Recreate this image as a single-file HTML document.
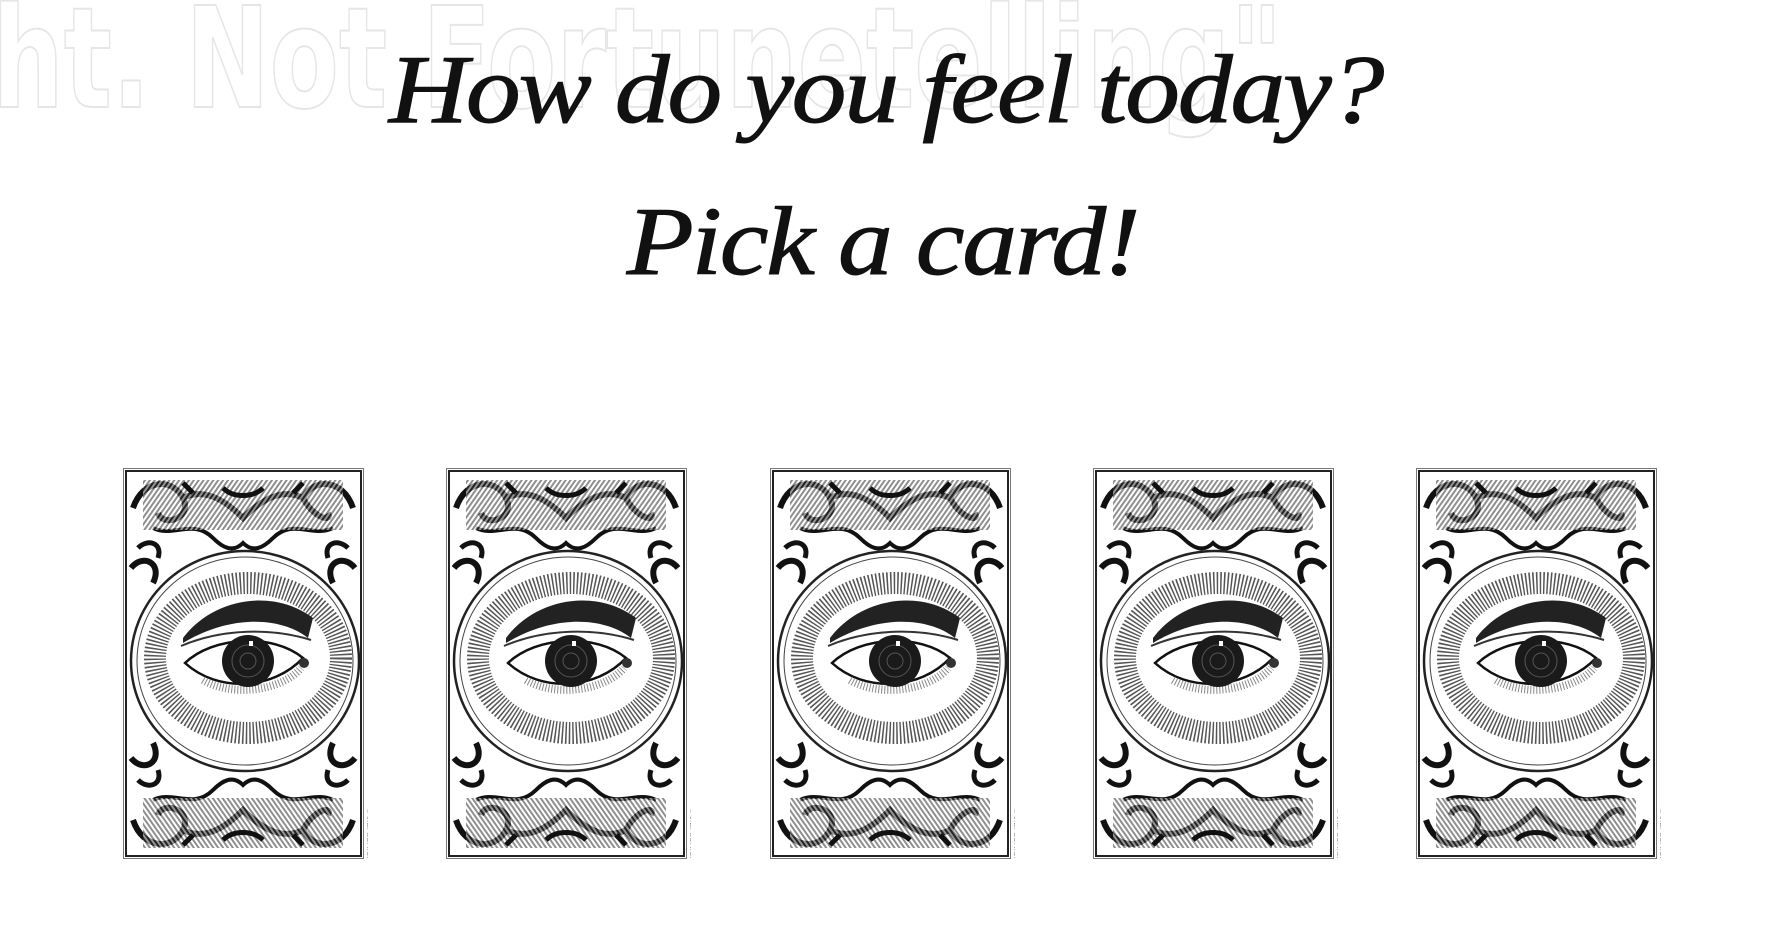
<!DOCTYPE html>
<html><head><meta charset="utf-8">
<style>
html,body{margin:0;padding:0;background:#fff;width:1781px;height:933px;overflow:hidden;position:relative}
.bg{position:absolute;left:-8px;top:-22px;font:bold 140px "DejaVu Sans","Liberation Sans",sans-serif;color:#fff;-webkit-text-stroke:2px #e6e6e6;white-space:nowrap;transform:scaleX(0.72);transform-origin:0 0}
.t{position:absolute;left:0;width:1781px;text-align:center;font:italic 98px "Liberation Serif","DejaVu Serif",serif;color:#111;-webkit-text-stroke:1px #111;letter-spacing:-2px;transform:scaleX(1.12)}
.card{position:absolute;top:468px;width:245px;height:392px}
</style></head><body>
<div class="bg">ht. Not Fortunetelling"</div>
<div class="t" style="top:34px;left:-5px">How do you feel today?</div>
<div class="t" style="top:186px;left:-8px">Pick a card!</div>
<svg width="0" height="0" style="position:absolute">
<defs>
<pattern id="hat" width="4" height="4" patternUnits="userSpaceOnUse" patternTransform="rotate(35)"><rect width="4" height="4" fill="#fff"/><rect width="2" height="4" fill="#333"/></pattern>
<g id="orn">
<path d="M10 40 C20 10 50 10 60 30 C70 50 40 60 35 45 M60 30 C80 20 100 30 120 50 C140 30 160 20 180 30 M180 30 C190 10 220 10 230 40 M180 30 C190 50 210 55 205 45" fill="none" stroke="#111" stroke-width="6"/>
<path d="M30 60 C50 70 70 50 90 70 C100 80 110 85 120 75 C130 85 140 80 150 70 C170 50 190 70 210 60" fill="none" stroke="#111" stroke-width="4"/>
<rect x="20" y="12" width="200" height="50" fill="url(#hat)" opacity=".55"/>
<path d="M15 80 C25 70 40 75 35 90 M225 80 C215 70 200 75 205 90 M60 15 l10 10 M180 15 l-10 10 M100 20 c10 10 30 10 40 0" fill="none" stroke="#111" stroke-width="5"/>
</g>
<symbol id="card" viewBox="0 0 245 392">
<rect x="0.5" y="0.5" width="240" height="390" fill="#fff" stroke="#777" stroke-width="1"/>
<rect x="3" y="3" width="235" height="385" fill="none" stroke="#222" stroke-width="2"/>
<use href="#orn"/>
<use href="#orn" transform="translate(0,392) scale(1,-1)"/>
<path d="M8 100 C20 85 40 95 30 115 M232 100 C220 85 200 95 210 115 M8 290 C20 305 40 295 30 275 M232 290 C220 305 200 295 210 275" fill="none" stroke="#111" stroke-width="6"/>
<ellipse cx="122" cy="193" rx="114" ry="110" fill="#fff" stroke="#222" stroke-width="2.5"/>
<ellipse cx="122" cy="193" rx="108" ry="104" fill="none" stroke="#444" stroke-width="1"/>
<ellipse cx="125" cy="190" rx="93" ry="75" fill="none" stroke="#555" stroke-width="22" stroke-dasharray="1.5 2"/>
<ellipse cx="125" cy="190" rx="72" ry="48" fill="#fff"/>
<path d="M60 170 C90 130 150 120 190 150 L185 170 C160 150 110 145 60 175Z" fill="#222"/>
<path d="M58 178 C100 160 150 160 188 172" fill="none" stroke="#333" stroke-width="2"/>
<path d="M62 195 C90 168 150 165 180 190 C150 222 95 225 62 195Z" fill="#fff" stroke="#111" stroke-width="2.5"/>
<path d="M80 212 C110 230 160 222 178 200" fill="none" stroke="#888" stroke-width="8" stroke-dasharray="1 2"/>
<circle cx="125" cy="193" r="26" fill="#1a1a1a"/>
<circle cx="125" cy="193" r="16" fill="none" stroke="#555" stroke-width="1"/>
<circle cx="125" cy="193" r="8" fill="none" stroke="#555" stroke-width="1"/>
<rect x="126" y="173" width="4" height="5" fill="#fff"/>
<circle cx="181" cy="195" r="5" fill="#333"/>
<text x="0" y="0" transform="translate(244,340) rotate(90)" font-family="Liberation Sans" font-size="8" fill="#999">© J.E. SBRICH 2015</text>
</symbol>
</defs></svg>
<svg class="card" style="left:123px"><use href="#card"/></svg>
<svg class="card" style="left:446px"><use href="#card"/></svg>
<svg class="card" style="left:770px"><use href="#card"/></svg>
<svg class="card" style="left:1093px"><use href="#card"/></svg>
<svg class="card" style="left:1416px"><use href="#card"/></svg>
</body></html>
